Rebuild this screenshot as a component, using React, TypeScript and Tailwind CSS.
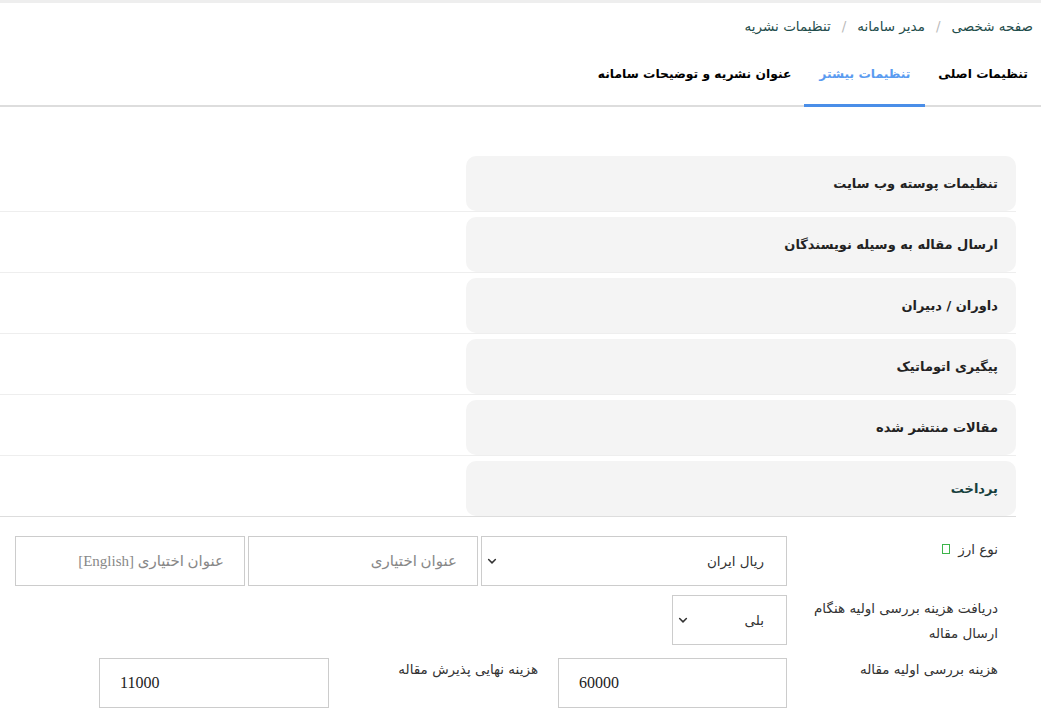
import React from 'react';

const faFont = { fontFamily: 'Tahoma, "DejaVu Sans", sans-serif' };

const sections = [
  'تنظیمات پوسته وب سایت',
  'ارسال مقاله به وسیله نویسندگان',
  'داوران / دبیران',
  'پیگیری اتوماتیک',
  'مقالات منتشر شده',
  'پرداخت',
];

function Chevron() {
  return (
    <svg width="12" height="12" viewBox="0 0 16 16" fill="none" stroke="#333" strokeWidth="2" strokeLinecap="round" strokeLinejoin="round">
      <path d="M3.5 6l4.5 4.5L12.5 6" />
    </svg>
  );
}

function Select({ value, className }: { value: string; className: string }) {
  return (
    <div className={`flex h-[50px] items-center justify-between border border-[#ccc] bg-white pr-[22px] pl-[4px] text-[13.5px] text-[#333] ${className}`}>
      <span>{value}</span>
      <Chevron />
    </div>
  );
}

function Input({ value, placeholder, className }: { value?: string; placeholder?: string; className: string }) {
  return (
    <div
      dir={value ? 'ltr' : 'rtl'}
      className={`flex h-[50px] items-center border border-[#ccc] bg-white px-[20px] text-[15px] ${className}`}
      style={{ fontFamily: '"Liberation Serif", "DejaVu Sans", serif' }}
    >
      {value ? (
        <span className="text-[16px] text-[#222]">{value}</span>
      ) : (
        <span className="text-[#888]">{placeholder}</span>
      )}
    </div>
  );
}

export default function App() {
  return (
    <div dir="rtl" className="min-h-[722px] w-[1041px] bg-white border-t-[3px] border-[#eeeeee]" style={faFont}>
      {/* breadcrumb */}
      <div className="flex h-[45px] items-center gap-[11px] pt-[2px] pr-[8px] text-[13.5px] text-[#1f4d4b]">
        <span>صفحه شخصی</span>
        <span className="text-[#bbb]">/</span>
        <span>مدیر سامانه</span>
        <span className="text-[#bbb]">/</span>
        <span>تنظیمات نشریه</span>
      </div>

      {/* tabs */}
      <div className="flex h-[59px] items-stretch border-b-2 border-[#dddddd] text-[12.3px] font-bold">
        <div className="flex items-center px-[13px] pb-[5px] text-black">تنظیمات اصلی</div>
        <div className="-mb-[2px] flex items-center border-b-[3px] border-[#4a8ee8] px-[15px] pb-[4px] text-[#5a9bf0]">تنظیمات بیشتر</div>
        <div className="flex items-center px-[13px] pb-[5px] text-black">عنوان نشریه و توضیحات سامانه</div>
      </div>

      {/* accordion */}
      <div className="mt-[49px] mr-[25px]">
        {sections.map((title, i) => (
          <div
            key={title}
            className={`border-b ${i === sections.length - 1 ? 'border-[#dddddd]' : 'mb-[5px] border-[#eeeeee]'}`}
          >
            <div className="flex h-[55px] w-[550px] items-center rounded-[10px] bg-[#f4f4f4] pr-[18px] text-[13px] font-bold">
              <span className={i === sections.length - 1 ? 'text-[#17403d]' : 'text-[#222]'}>{title}</span>
            </div>
          </div>
        ))}
      </div>

      {/* form */}
      <div className="mt-[19px] mr-[25px] flex flex-col gap-[9px] text-[13.5px] text-[#333]">
        <div className="flex">
          <div className="flex w-[229px] items-start gap-[8px] pt-[3px] pr-[18px]">
            <span>نوع ارز</span>
            <span className="mt-[5px] inline-block h-[10px] w-[8px] border border-[#3cb44a]" />
          </div>
          <Select value="ریال ایران" className="w-[306px]" />
          <Input placeholder="عنوان اختیاری" className="mr-[3px] w-[230px]" />
          <Input placeholder="عنوان اختیاری [English]" className="mr-[3px] w-[230px]" />
        </div>

        <div className="flex">
          <div className="w-[229px] pt-[1px] pr-[18px] pl-[14px] leading-[25px]">
            دریافت هزینه بررسی اولیه هنگام ارسال مقاله
          </div>
          <Select value="بلی" className="w-[115px]" />
        </div>

        <div className="mt-[3px] flex">
          <div className="w-[229px] pt-[1px] pr-[18px]">هزینه بررسی اولیه مقاله</div>
          <Input value="60000" className="w-[229px]" />
          <div className="w-[229px] pt-[1px] pr-[20px]">هزینه نهایی پذیرش مقاله</div>
          <Input value="11000" className="w-[230px]" />
        </div>
      </div>
    </div>
  );
}
